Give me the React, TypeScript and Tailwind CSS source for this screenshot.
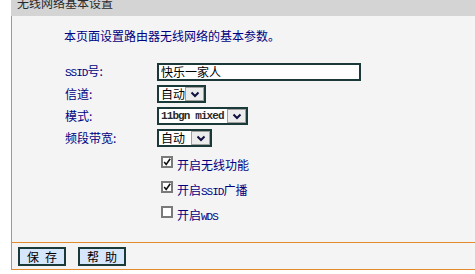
import React from 'react';

function Chevron() {
  return (
    <svg width="10" height="7" viewBox="0 0 10 7">
      <path d="M1.5 1.5 L5 5 L8.5 1.5" fill="none" stroke="#101040" strokeWidth="2" />
    </svg>
  );
}

function Select({ value, width, mono }: { value: string; width: string; mono?: boolean }) {
  return (
    <div className={`flex h-[18px] border-2 border-[#1a3a3a] bg-white ${width}`}>
      <span
        className={
          mono
            ? "flex-1 pl-[2px] font-['Liberation_Mono',monospace] text-[11px] font-bold leading-[14px] tracking-[-0.9px] text-[#2a2a2a]"
            : 'flex-1 pl-[2px] text-[12px] leading-[14px] text-black'
        }
      >
        {value}
      </span>
      <span className="flex w-[19px] items-center justify-center border border-[#a0a0a0] bg-[#ececec]">
        <Chevron />
      </span>
    </div>
  );
}

function Check({ checked, children }: { checked: boolean; children: React.ReactNode }) {
  return (
    <div className="flex h-[25px] items-start">
      <span className="mt-[2px] flex h-[12px] w-[12px] items-center justify-center border-2 border-[#7a7a7a] bg-white">
        {checked && (
          <svg width="10" height="10" viewBox="0 0 10 10" className="-mt-[1px]">
            <path d="M1.5 5 L4 8 L9 1" fill="none" stroke="#111" strokeWidth="2" />
          </svg>
        )}
      </span>
      <span className="ml-[4px] mt-[5px] text-[12px] leading-[12px] text-[#000080]">{children}</span>
    </div>
  );
}

function Btn({ a, b }: { a: string; b: string }) {
  return (
    <button className="flex h-[19px] w-[48px] items-center justify-center gap-[6px] border-2 border-[#1a3a3a] bg-[#d6e6fb] text-[12px] leading-[14px] text-black">
      <span>{a}</span>
      <span>{b}</span>
    </button>
  );
}

const mono = "font-['Liberation_Mono',monospace] text-[11px] tracking-[-1px]";

export default function App() {
  const rows = [
    { label: <><span className={mono}>SSID</span>号:</>, control: (
      <div className="flex h-[18px] w-[204px] items-center border-2 border-[#1a3a3a] bg-white pl-[2px] text-[12px] text-black">
        快乐一家人
      </div>
    ) },
    { label: '信道:', control: <Select value="自动" width="w-[49px]" /> },
    { label: '模式:', control: <Select value="11bgn mixed" width="w-[91px]" mono /> },
    { label: '频段带宽:', control: <Select value="自动" width="w-[55px]" /> },
  ];

  return (
    <div className="flex h-[274px] w-[475px] overflow-hidden bg-white font-['Noto_Sans_CJK_SC','Noto_Sans',sans-serif]">
      <div className="w-[11px] shrink-0" />
      <div className="flex flex-1 flex-col">
        {/* title bar, text is clipped at the top like the original */}
        <div className="h-[16px] shrink-0 overflow-hidden bg-[#d4d4d4] pl-[6px]">
          <div className="-mt-[3px] text-[12px] leading-[12px] text-[#2a2a2a]">无线网络基本设置</div>
        </div>

        <div className="flex h-[254px] flex-col border-b border-l border-[#e38b2c] bg-[#f4f4f4]">
          {/* content */}
          <div className="h-[226px] shrink-0 pl-[52px] pt-[12px]">
            <div className="h-[16px] text-[12px] leading-[16px] text-[#000080]">
              本页面设置路由器无线网络的基本参数。
            </div>
            <div className="mt-[19px] flex flex-col gap-[4px] pl-[1px]">
              {rows.map((r, i) => (
                <div key={i} className="flex items-center">
                  <span className="w-[92px] text-[12px] leading-[12px] text-[#000080]">{r.label}</span>
                  {r.control}
                </div>
              ))}
            </div>
            <div className="ml-[97px] mt-[7px] flex flex-col">
              <Check checked>开启无线功能</Check>
              <Check checked>
                开启<span className={mono}>SSID</span>广播
              </Check>
              <Check checked={false}>
                开启<span className={mono}>WDS</span>
              </Check>
            </div>
          </div>

          {/* footer */}
          <div className="flex flex-1 gap-[12px] border-t border-[#e38b2c] pl-[6px] pt-[4px]">
            <Btn a="保" b="存" />
            <Btn a="帮" b="助" />
          </div>
        </div>
      </div>
    </div>
  );
}
